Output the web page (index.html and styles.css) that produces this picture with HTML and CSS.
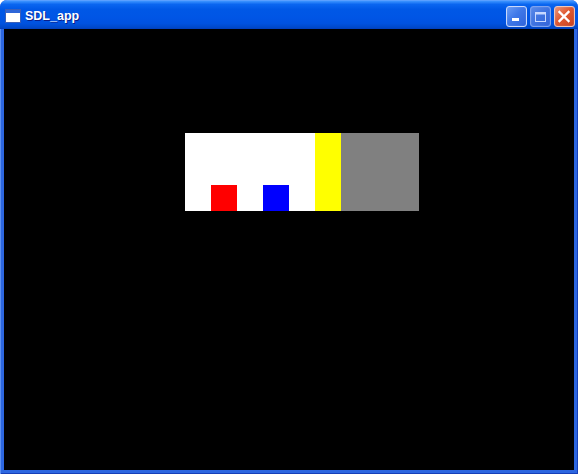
FILE: index.html
```html
<!DOCTYPE html>
<html>
<head>
<meta charset="utf-8">
<link rel="stylesheet" href="styles.css">
</head>
<body>
<div class="window">
  <div class="titlebar">
    <svg class="appicon" width="16" height="14" viewBox="0 0 16 14">
      <rect x="0.5" y="0.5" width="15" height="13" fill="#fff" stroke="#3a5fb8"/>
      <rect x="1" y="1" width="14" height="3" fill="#2f66d8"/>
    </svg>
    <span class="title">SDL_app</span>
    <div class="buttons">
      <div class="btn">
        <svg width="21" height="21" viewBox="0 0 21 21"><rect x="6" y="12" width="7" height="3" fill="#fff"/></svg>
      </div>
      <div class="btn disabled">
        <svg width="21" height="21" viewBox="0 0 21 21"><rect x="5.5" y="6.5" width="10" height="9" fill="none" stroke="#c8d8ff"/><rect x="5" y="6" width="11" height="2.5" fill="#c8d8ff"/></svg>
      </div>
      <div class="btn close">
        <svg width="21" height="21" viewBox="0 0 21 21"><path d="M5.5 6 L14.5 15 M14.5 6 L5.5 15" stroke="#fff" stroke-width="2.4" stroke-linecap="square"/></svg>
      </div>
    </div>
  </div>
  <div class="frame">
    <div class="client">
      <div class="scene">
        <div class="white">
          <div class="sq red"></div>
          <div class="sq blue"></div>
        </div>
        <div class="yellow"></div>
        <div class="gray"></div>
      </div>
    </div>
  </div>
</div>
</body>
</html>
```
FILE: styles.css
```css
html, body {
  margin: 0;
  padding: 0;
  background: #ffffff;
}
.window {
  width: 578px;
  height: 474px;
  display: flex;
  flex-direction: column;
  border-radius: 7px 7px 0 0;
  overflow: hidden;
  background: #0a3fd8;
}
.titlebar {
  height: 29px;
  flex: none;
  display: flex;
  align-items: center;
  padding-left: 5px;
  box-sizing: border-box;
  background: linear-gradient(to bottom, #3d95ff 0%, #0a66f0 12%, #0058e6 30%, #0055e5 60%, #0052df 80%, #0048c8 95%, #003dba 100%);
  border-top: 1px solid #5aa0ff;
}
.appicon {
  flex: none;
  margin-top: 1px;
}
.title {
  margin-left: 4px;
  margin-top: 1px;
  color: #ffffff;
  font-family: "Liberation Sans", Arial, sans-serif;
  font-weight: bold;
  font-size: 12.5px;
  text-shadow: 1px 1px 0 #0a1e8a;
}
.buttons {
  margin-left: auto;
  margin-right: 3px;
  display: flex;
  gap: 3px;
  margin-top: 2px;
}
.btn {
  width: 21px;
  height: 21px;
  box-sizing: border-box;
  border: 1px solid #c9d8fb;
  border-radius: 3px;
  background: linear-gradient(135deg, #6a9cf5 0%, #3f78e8 45%, #2f63da 100%);
  box-shadow: inset 0 0 1px #9bc1ff;
  position: relative;
  overflow: hidden;
}
.btn.disabled {
  border-color: #7fa2ee;
  background: linear-gradient(135deg, #5a8ae8 0%, #3f73e0 50%, #3464d8 100%);
}
.btn svg {
  position: absolute;
  left: -1px;
  top: -1px;
}
.btn.close {
  border-color: #f2c6b6;
  background: linear-gradient(135deg, #ec9478 0%, #e05a32 45%, #c9421e 100%);
}
.frame {
  flex: 1;
  display: flex;
  padding: 0 4px 4px 4px;
  background: #2c66e0;
  box-shadow: inset 1px 0 0 #5b8ff0, inset -1px 0 0 #163fb8, inset 0 -1px 0 #163fb8;
}
.client {
  flex: 1;
  background: #000000;
  padding: 104px 0 0 181px;
}
.scene {
  display: flex;
  height: 78px;
}
.white {
  width: 130px;
  height: 78px;
  background: #ffffff;
  display: flex;
  align-items: flex-end;
  padding-left: 26px;
  gap: 26px;
  box-sizing: border-box;
}
.sq {
  width: 26px;
  height: 26px;
}
.red { background: #ff0000; }
.blue { background: #0000ff; }
.yellow {
  width: 26px;
  background: #ffff00;
}
.gray {
  width: 78px;
  background: #808080;
}
```
